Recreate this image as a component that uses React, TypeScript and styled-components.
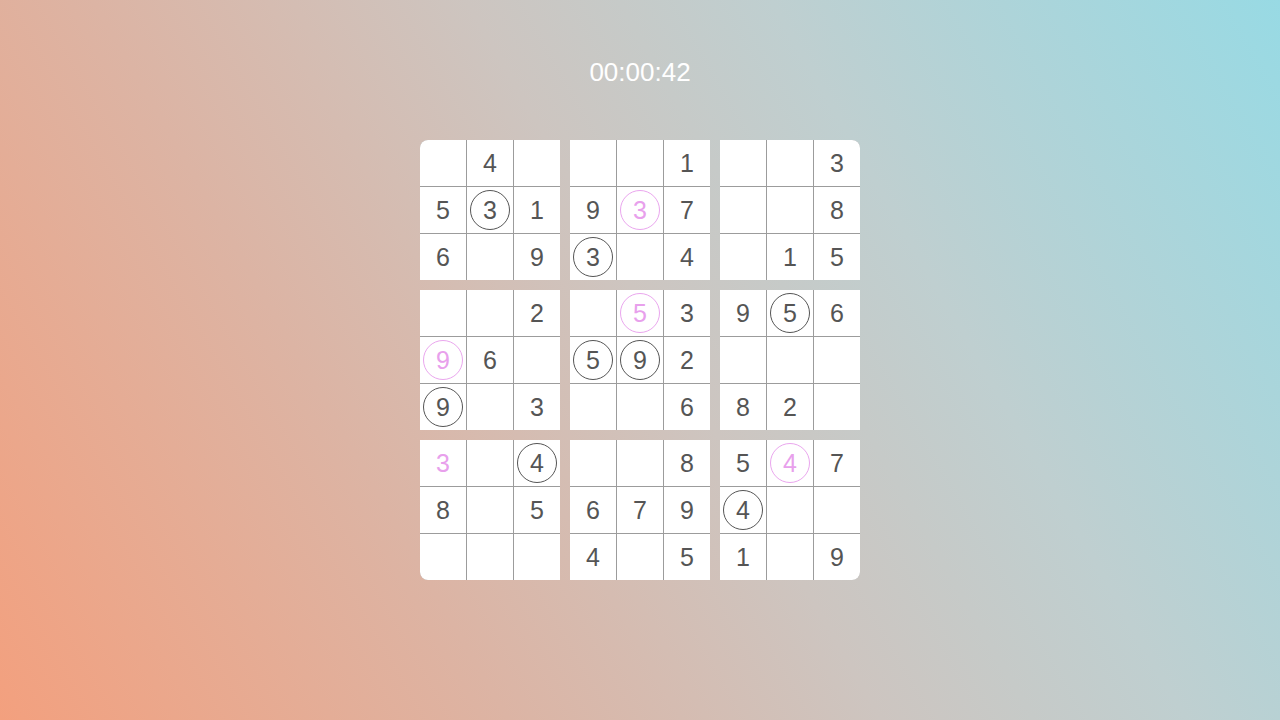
import styled, { createGlobalStyle } from "styled-components";

// "" empty, "5" given digit, "c5" circled, "p5" pink circled, "q5" pink plain
const boxes: string[][] = [
    ["", "4", "", "5", "c3", "1", "6", "", "9"],
    ["", "", "1", "9", "p3", "7", "c3", "", "4"],
    ["", "", "3", "", "", "8", "", "1", "5"],
    ["", "", "2", "p9", "6", "", "c9", "", "3"],
    ["", "p5", "3", "c5", "c9", "2", "", "", "6"],
    ["9", "c5", "6", "", "", "", "8", "2", ""],
    ["q3", "", "c4", "8", "", "5", "", "", ""],
    ["", "", "8", "6", "7", "9", "4", "", "5"],
    ["5", "p4", "7", "c4", "", "", "1", "", "9"],
];

export default function App() {
    return (
        <>
            <GlobalStyle />
            <Page>
                <Timer>00:00:42</Timer>
                <Board>
                    {boxes.map((cells, b) => (
                        <Box key={b}>
                            {cells.map((v, i) => {
                                const kind = v.length > 1 ? v[0] : "";
                                const digit = v.length > 1 ? v.slice(1) : v;
                                const pink = kind === "p" || kind === "q";
                                const ring = kind === "c" || kind === "p";
                                return (
                                    <Cell key={i}>
                                        {digit && (
                                            <Digit $pink={pink} $ring={ring}>
                                                {digit}
                                            </Digit>
                                        )}
                                    </Cell>
                                );
                            })}
                        </Box>
                    ))}
                </Board>
            </Page>
        </>
    );
}

const GlobalStyle = createGlobalStyle`
    html, body {
        margin: 0;
        padding: 0;
    }
    body {
        font-family: "Liberation Sans", Arial, sans-serif;
    }
`

const Page = styled.div`
    width: 100vw;
    height: 100vh;
    box-sizing: border-box;
    padding-top: 57px;
    display: flex;
    flex-direction: column;
    align-items: center;
    background: linear-gradient(60deg, #f3a07e 0%, #dcb4a4 30%, #cdc5c0 52%, #bfcfd0 70%, #98dae4 100%);
    overflow: hidden;
`

const Timer = styled.div`
    color: #ffffff;
    font-size: 26px;
    line-height: 30px;
    margin-bottom: 53px;
`

const Board = styled.div`
    display: grid;
    grid-template-columns: repeat(3, 140px);
    gap: 10px;
    border-radius: 8px;
    overflow: hidden;
`

const Box = styled.div`
    display: grid;
    grid-template-columns: repeat(3, 46px);
    grid-auto-rows: 46px;
    gap: 1px;
    background: #9c9c9c;
`

const Cell = styled.div`
    background: #ffffff;
    display: flex;
    align-items: center;
    justify-content: center;
`

const Digit = styled.div<{ $pink: boolean; $ring: boolean }>`
    width: 40px;
    height: 40px;
    box-sizing: border-box;
    display: flex;
    align-items: center;
    justify-content: center;
    padding-top: 1px;
    border-radius: 50%;
    border: 1.6px solid ${({ $ring, $pink }) => ($ring ? ($pink ? "#eaa6ee" : "#555555") : "transparent")};
    color: ${({ $pink }) => ($pink ? "#e8a0ec" : "#555555")};
    font-size: 25px;
    line-height: 1;
`
